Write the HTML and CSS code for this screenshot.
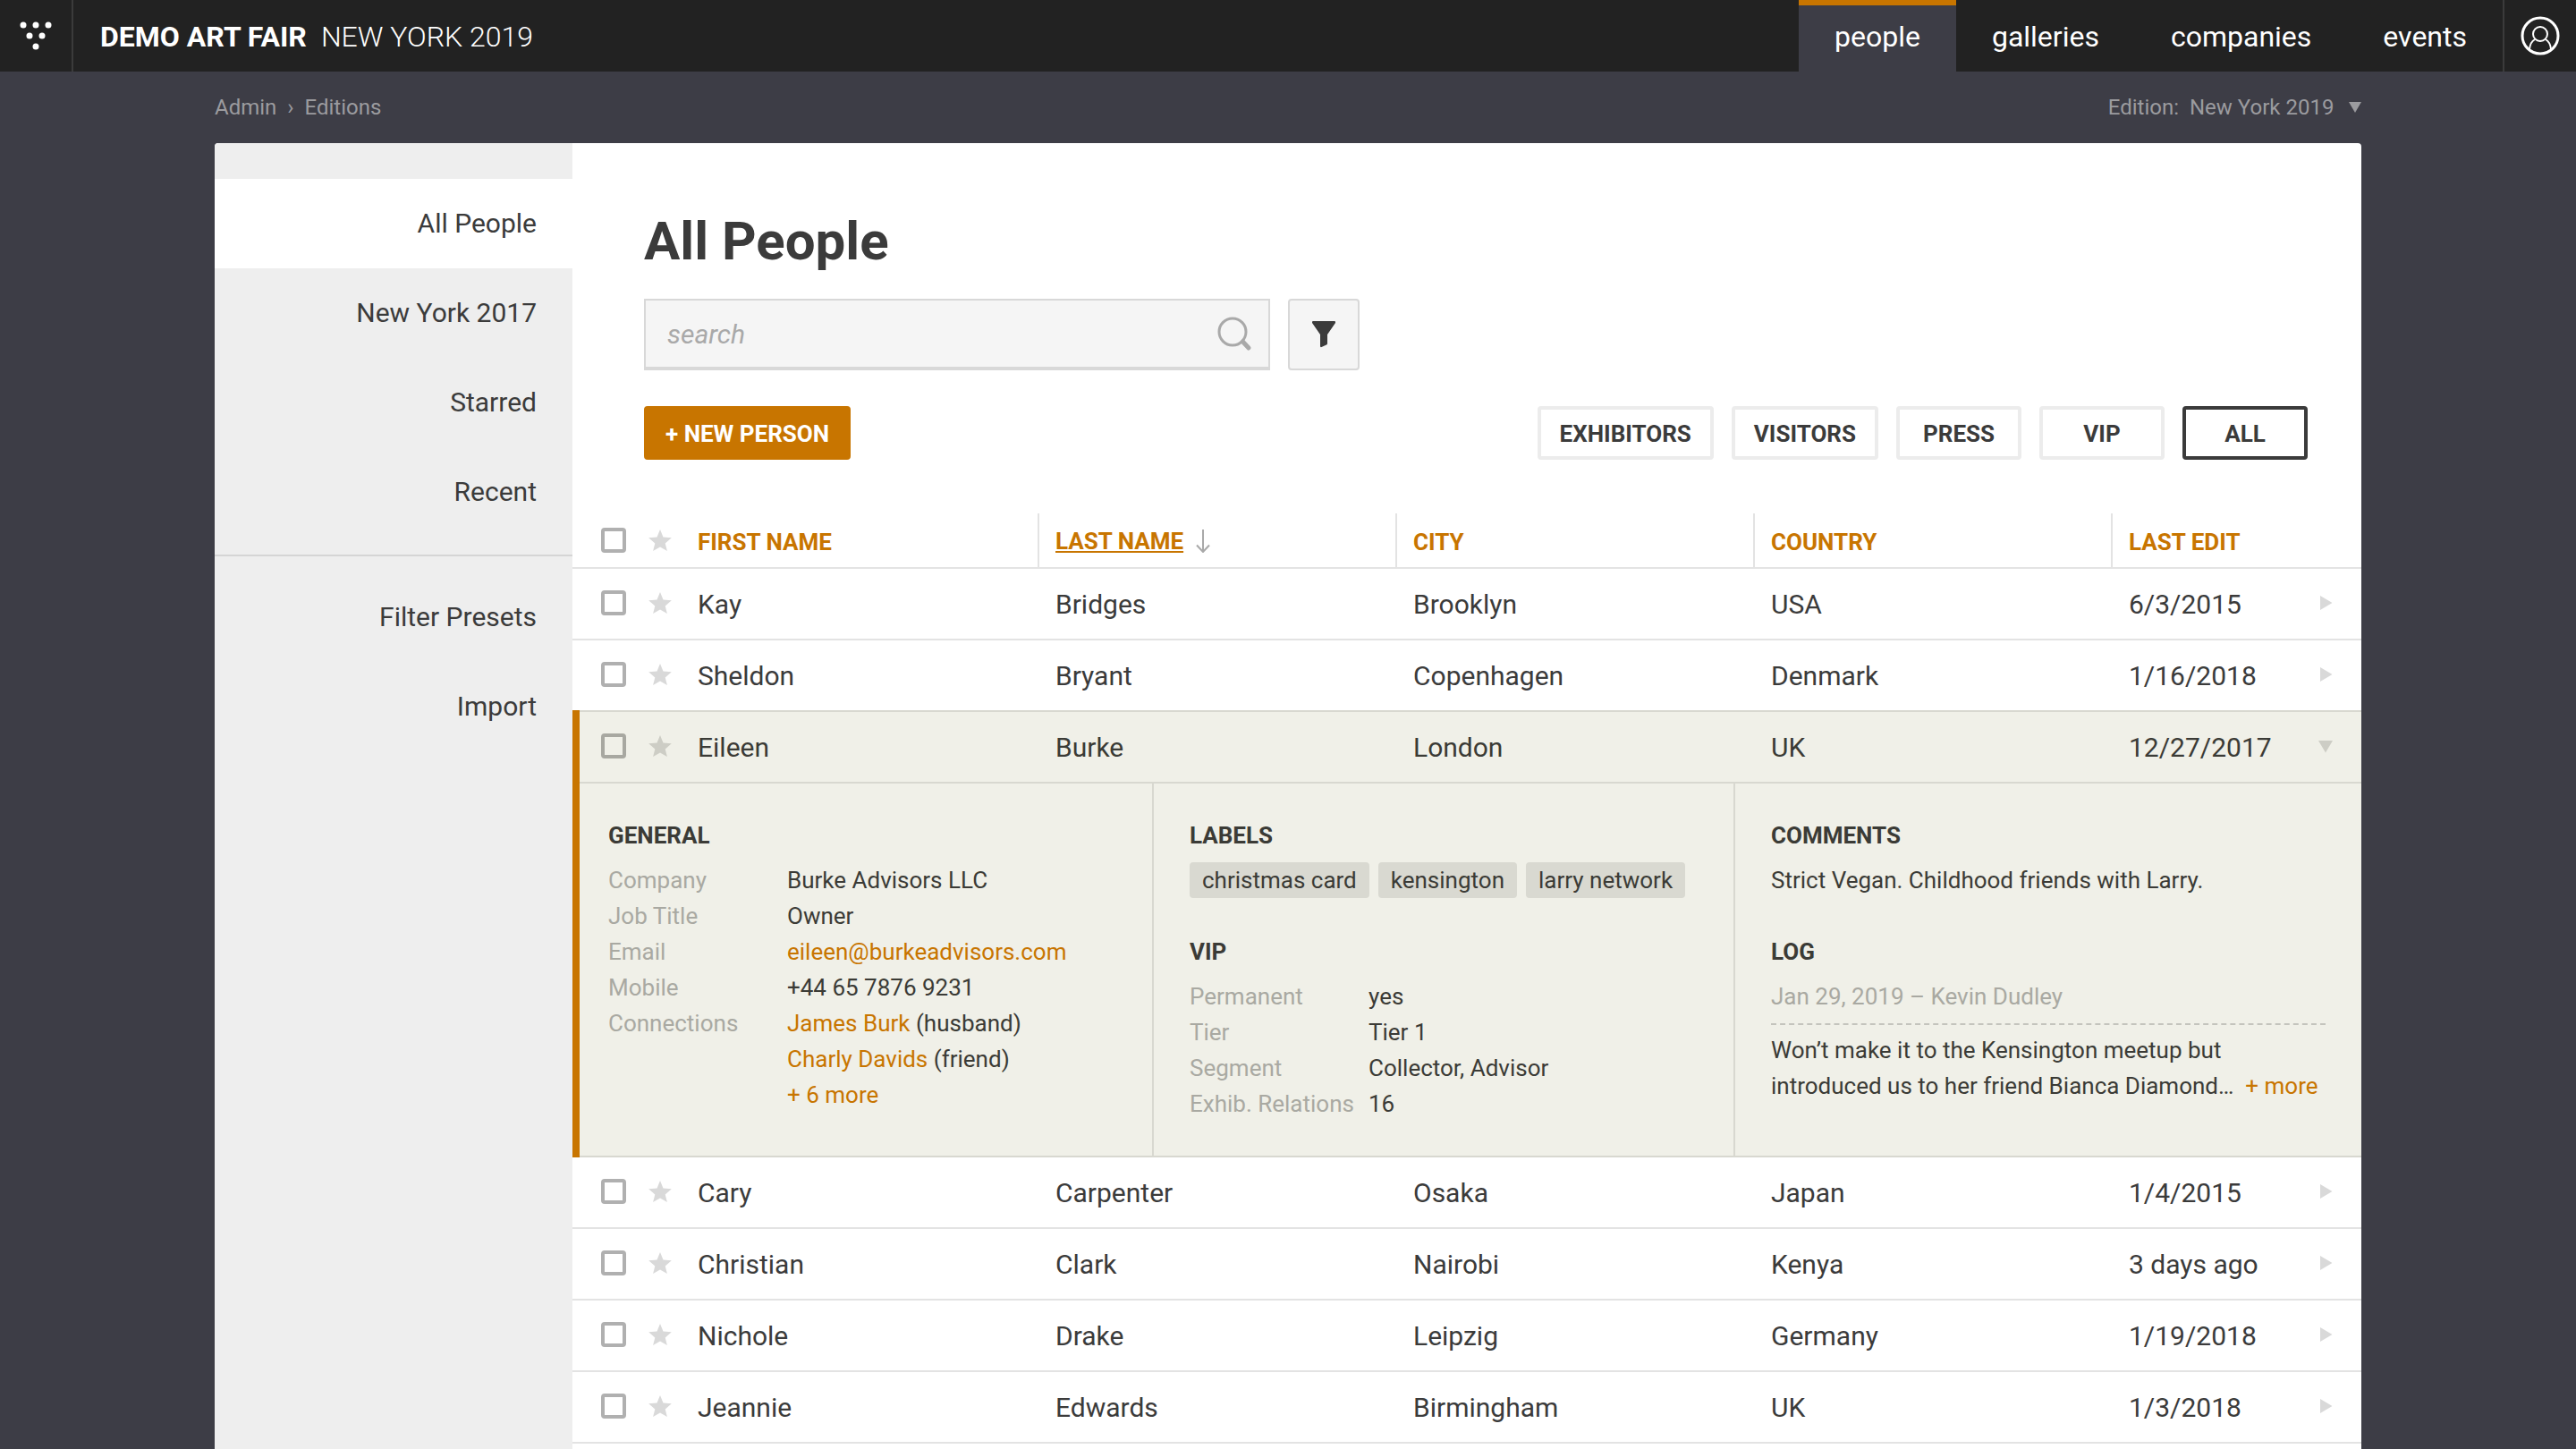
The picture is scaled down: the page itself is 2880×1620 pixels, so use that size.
FILE: index.html
```html
<!DOCTYPE html>
<html lang="en">
<head>
    <meta charset="UTF-8">
    <meta name="viewport" content="width=device-width, initial-scale=1.0">
    <title>All People - Demo Art Fair</title>
    <link rel="stylesheet" href="styles.css">
</head>
<body>
    <!-- shared icons -->
    <svg class="sprite" aria-hidden="true">
        <symbol id="star" viewBox="0 0 26 24">
            <path d="M13 0l3.500 8.600 9.300.7-7.100 6.100 2.200 8.600-7.900-4.500L5.100 24l2.200-8.600L.2 9.300l9.300-.7z"/>
        </symbol>
        <symbol id="triangle" viewBox="0 0 16 16">
            <path d="M2 0L15.500 8 2 16z"/>
        </symbol>
    </svg>

    <header class="topbar">
        <a class="logo" href="#" aria-label="Home">
            <svg width="80" height="80" viewBox="0 0 80 80" fill="#fff">
                <circle cx="26" cy="28" r="3.500"/>
                <circle cx="40" cy="28" r="3.500"/>
                <circle cx="54" cy="28" r="3.500"/>
                <circle cx="33" cy="40" r="3.500"/>
                <circle cx="47" cy="40" r="3.500"/>
                <circle cx="40" cy="52" r="3.500"/>
            </svg>
        </a>
        <div class="fair"><strong>DEMO ART FAIR</strong><span>NEW YORK 2019</span></div>
        <nav class="main-nav">
            <a class="active" href="#">people</a>
            <a href="#">galleries</a>
            <a href="#">companies</a>
            <a href="#">events</a>
        </nav>
        <a class="user" href="#" aria-label="Account">
            <svg width="80" height="80" viewBox="0 0 80 80" fill="none" stroke="#fff">
                <circle cx="40" cy="40" r="20" stroke-width="3"/>
                <circle cx="40" cy="38" r="8" stroke-width="2"/>
                <path d="M28 55c.5-5 2.500-9 6-11M52 55c-.5-5-2.500-9-6-11" stroke-width="2"/>
            </svg>
        </a>
    </header>

    <div class="subbar">
        <nav class="breadcrumb">
            <a href="#">Admin</a>
            <span>›</span>
            <a href="#">Editions</a>
        </nav>
        <div class="edition">
            <label for="edition">Edition:</label>
            <select id="edition">
                <option>New York 2019</option>
            </select>
            <svg width="14" height="12" viewBox="0 0 14 12"><path d="M0 0h14L7 12z"/></svg>
        </div>
    </div>

    <div class="container">
        <aside class="sidebar">
            <ul>
                <li><a class="active" href="#">All People</a></li>
                <li><a href="#">New York 2017</a></li>
                <li><a href="#">Starred</a></li>
                <li><a href="#">Recent</a></li>
            </ul>
            <ul>
                <li><a href="#">Filter Presets</a></li>
                <li><a href="#">Import</a></li>
            </ul>
        </aside>

        <main class="content">
            <div class="content-head">
                <h1>All People</h1>

                <div class="search-row">
                    <div class="search-box">
                        <input type="text" placeholder="search" aria-label="Search">
                        <button type="button" aria-label="Search">
                            <svg width="40" height="40" viewBox="0 0 40 40" fill="none" stroke="#a9a9a9">
                                <circle cx="18" cy="18" r="15" stroke-width="3"/>
                                <path d="M29.500 29l6.500 7" stroke-width="5" stroke-linecap="round"/>
                            </svg>
                        </button>
                    </div>
                    <button class="filter-btn" type="button" aria-label="Filter">
                        <svg width="26" height="30" viewBox="0 0 26 30" fill="#3b3b3b">
                            <path d="M1 0h24q1 0 1 1v1l-9 13v10q0 1-1 1.500L10.500 29Q9 29.500 9 28V15L0 2V1q0-1 1-1z"/>
                        </svg>
                    </button>
                </div>

                <div class="action-row">
                    <button class="new-btn" type="button">+ NEW PERSON</button>
                    <div class="group-filter">
                        <button type="button">EXHIBITORS</button>
                        <button type="button">VISITORS</button>
                        <button type="button">PRESS</button>
                        <button type="button">VIP</button>
                        <button class="active" type="button">ALL</button>
                    </div>
                </div>
            </div>

            <table class="people">
                <colgroup>
                    <col class="col-select">
                    <col class="col-first">
                    <col class="col-std">
                    <col class="col-std">
                    <col class="col-std">
                    <col class="col-edit">
                </colgroup>
                <thead>
                    <tr>
                        <th><div class="select"><input type="checkbox" aria-label="Select all"><button class="star" type="button" aria-label="Starred"><svg><use href="#star"/></svg></button></div></th>
                        <th><button type="button">FIRST NAME</button></th>
                        <th>
                            <button class="sorted" type="button"><span>LAST NAME</span><svg width="16" height="26" viewBox="0 0 16 26" fill="none" stroke="#a9a9a9" stroke-width="2"><path d="M8 0v24M1 17.500l7 7.500 7-7.500"/></svg></button>
                        </th>
                        <th><button type="button">CITY</button></th>
                        <th><button type="button">COUNTRY</button></th>
                        <th><button type="button">LAST EDIT</button></th>
                    </tr>
                </thead>
                <tbody>
                    <tr>
                        <td><div class="select"><input type="checkbox" aria-label="Select Kay Bridges"><button class="star" type="button" aria-label="Star"><svg><use href="#star"/></svg></button></div></td>
                        <td>Kay</td>
                        <td>Bridges</td>
                        <td>Brooklyn</td>
                        <td>USA</td>
                        <td><div class="last">6/3/2015<button class="toggle" type="button" aria-label="Expand"><svg><use href="#triangle"/></svg></button></div></td>
                    </tr>
                    <tr>
                        <td><div class="select"><input type="checkbox" aria-label="Select Sheldon Bryant"><button class="star" type="button" aria-label="Star"><svg><use href="#star"/></svg></button></div></td>
                        <td>Sheldon</td>
                        <td>Bryant</td>
                        <td>Copenhagen</td>
                        <td>Denmark</td>
                        <td><div class="last">1/16/2018<button class="toggle" type="button" aria-label="Expand"><svg><use href="#triangle"/></svg></button></div></td>
                    </tr>
                </tbody>
                <tbody class="open">
                    <tr>
                        <td><div class="select"><input type="checkbox" aria-label="Select Eileen Burke"><button class="star" type="button" aria-label="Star"><svg><use href="#star"/></svg></button></div></td>
                        <td>Eileen</td>
                        <td>Burke</td>
                        <td>London</td>
                        <td>UK</td>
                        <td><div class="last">12/27/2017<button class="toggle" type="button" aria-label="Collapse"><svg><use href="#triangle"/></svg></button></div></td>
                    </tr>
                    <tr class="detail">
                        <td colspan="6">
                            <div class="detail-grid">
                                <div class="detail-col">
                                    <section>
                                        <h2>GENERAL</h2>
                                        <dl>
                                            <dt>Company</dt>
                                            <dd>Burke Advisors LLC</dd>
                                            <dt>Job Title</dt>
                                            <dd>Owner</dd>
                                            <dt>Email</dt>
                                            <dd><a href="#">eileen@burkeadvisors.com</a></dd>
                                            <dt>Mobile</dt>
                                            <dd>+44 65 7876 9231</dd>
                                            <dt>Connections</dt>
                                            <dd>
                                                <a href="#">James Burk</a> (husband)<br>
                                                <a href="#">Charly Davids</a> (friend)<br>
                                                <a href="#">+ 6 more</a>
                                            </dd>
                                        </dl>
                                    </section>
                                </div>
                                <div class="detail-col">
                                    <section>
                                        <h2>LABELS</h2>
                                        <div class="tags">
                                            <span>christmas card</span>
                                            <span>kensington</span>
                                            <span>larry network</span>
                                        </div>
                                    </section>
                                    <section>
                                        <h2>VIP</h2>
                                        <dl>
                                            <dt>Permanent</dt>
                                            <dd>yes</dd>
                                            <dt>Tier</dt>
                                            <dd>Tier 1</dd>
                                            <dt>Segment</dt>
                                            <dd>Collector, Advisor</dd>
                                            <dt>Exhib. Relations</dt>
                                            <dd>16</dd>
                                        </dl>
                                    </section>
                                </div>
                                <div class="detail-col">
                                    <section>
                                        <h2>COMMENTS</h2>
                                        <p>Strict Vegan. Childhood friends with Larry.</p>
                                    </section>
                                    <section>
                                        <h2>LOG</h2>
                                        <p class="log-meta">Jan 29, 2019 – Kevin Dudley</p>
                                        <p>Won’t make it to the Kensington meetup but introduced us to her friend Bianca Diamond…&nbsp; <a href="#">+&nbsp;more</a></p>
                                    </section>
                                </div>
                            </div>
                        </td>
                    </tr>
                </tbody>
                <tbody>
                    <tr>
                        <td><div class="select"><input type="checkbox" aria-label="Select Cary Carpenter"><button class="star" type="button" aria-label="Star"><svg><use href="#star"/></svg></button></div></td>
                        <td>Cary</td>
                        <td>Carpenter</td>
                        <td>Osaka</td>
                        <td>Japan</td>
                        <td><div class="last">1/4/2015<button class="toggle" type="button" aria-label="Expand"><svg><use href="#triangle"/></svg></button></div></td>
                    </tr>
                    <tr>
                        <td><div class="select"><input type="checkbox" aria-label="Select Christian Clark"><button class="star" type="button" aria-label="Star"><svg><use href="#star"/></svg></button></div></td>
                        <td>Christian</td>
                        <td>Clark</td>
                        <td>Nairobi</td>
                        <td>Kenya</td>
                        <td><div class="last">3 days ago<button class="toggle" type="button" aria-label="Expand"><svg><use href="#triangle"/></svg></button></div></td>
                    </tr>
                    <tr>
                        <td><div class="select"><input type="checkbox" aria-label="Select Nichole Drake"><button class="star" type="button" aria-label="Star"><svg><use href="#star"/></svg></button></div></td>
                        <td>Nichole</td>
                        <td>Drake</td>
                        <td>Leipzig</td>
                        <td>Germany</td>
                        <td><div class="last">1/19/2018<button class="toggle" type="button" aria-label="Expand"><svg><use href="#triangle"/></svg></button></div></td>
                    </tr>
                    <tr>
                        <td><div class="select"><input type="checkbox" aria-label="Select Jeannie Edwards"><button class="star" type="button" aria-label="Star"><svg><use href="#star"/></svg></button></div></td>
                        <td>Jeannie</td>
                        <td>Edwards</td>
                        <td>Birmingham</td>
                        <td>UK</td>
                        <td><div class="last">1/3/2018<button class="toggle" type="button" aria-label="Expand"><svg><use href="#triangle"/></svg></button></div></td>
                    </tr>
                </tbody>
            </table>
        </main>
    </div>
</body>
</html>
```
FILE: styles.css
```css
* {
    margin: 0;
    padding: 0;
    box-sizing: border-box;
}

body {
    display: flex;
    flex-direction: column;
    min-height: 100vh;
    background: #3d3d46;
    color: #3b3b3b;
    font-family: Roboto, "Liberation Sans", sans-serif;
    font-size: 30px;
}

a {
    color: inherit;
    text-decoration: none;
}

ul {
    list-style: none;
}

button,
input,
select {
    font: inherit;
    color: inherit;
    background: none;
    border: none;
}

button {
    cursor: pointer;
}

svg {
    display: block;
}

.sprite {
    display: none;
}

/* top bar */
.topbar {
    display: flex;
    height: 80px;
    background: #222;
    color: #fff;
    font-size: 32px;
    line-height: 82px;
}

.logo {
    border-right: 2px solid #3b3b3b;
}

.fair {
    display: flex;
    gap: 16px;
    margin-left: 30px;
}

.fair span {
    font-weight: 300;
}

.main-nav {
    display: flex;
    margin-left: auto;
}

.main-nav a {
    padding: 0 40px;
}

.main-nav .active {
    background: #3d3d46;
    box-shadow: inset 0 6px #c87500;
}

.user {
    border-left: 2px solid #3b3b3b;
}

/* breadcrumb and edition */
.subbar {
    display: flex;
    justify-content: space-between;
    height: 80px;
    margin: 0 240px;
    color: #9b9b9f;
    font-size: 24px;
    line-height: 80px;
}

.breadcrumb {
    display: flex;
    gap: 12px;
}

.edition {
    display: flex;
    align-items: center;
    gap: 12px;
}

.edition select {
    appearance: none;
    margin-right: 4px;
}

.edition svg {
    fill: #9b9b9f;
}

/* page card */
.container {
    display: flex;
    flex: 1;
    margin: 0 240px;
    background: #fff;
    border-radius: 4px 4px 0 0;
    overflow: hidden;
}

.sidebar {
    flex: 0 0 400px;
    padding-top: 40px;
    background: #eee;
    text-align: right;
    line-height: 100px;
}

.sidebar ul + ul {
    margin-top: 20px;
    padding-top: 18px;
    border-top: 2px solid #d5d5d5;
}

.sidebar a {
    display: block;
    padding: 0 40px;
}

.sidebar .active {
    background: #fff;
}

.content {
    flex: 1;
    min-width: 0;
}

.content-head {
    padding: 80px 60px 60px 80px;
}

h1 {
    margin-bottom: 34px;
    font-size: 60px;
    line-height: 60px;
}

.search-row {
    display: flex;
    gap: 20px;
    margin-bottom: 40px;
}

.search-box {
    display: flex;
    align-items: center;
    width: 700px;
    height: 80px;
    padding: 0 18px 0 24px;
    background: #f5f5f5;
    border: 2px solid #d8d8d8;
    border-bottom-width: 4px;
}

.search-box input {
    flex: 1;
    min-width: 0;
    outline: none;
}

.search-box input::placeholder {
    color: #a9a9a9;
    font-style: italic;
}

.filter-btn {
    display: flex;
    align-items: center;
    justify-content: center;
    width: 80px;
    height: 80px;
    background: #f5f5f5;
    border: 2px solid #d8d8d8;
    border-radius: 4px;
}

.action-row {
    display: flex;
    justify-content: space-between;
}

.new-btn,
.group-filter button {
    height: 60px;
    padding: 2px 20px 0;
    border: 4px solid #ececec;
    border-radius: 4px;
    font-size: 26px;
    font-weight: 700;
}

.new-btn {
    background: #c87500;
    border-color: #c87500;
    color: #fff;
}

.group-filter {
    display: flex;
    gap: 20px;
}

.group-filter button {
    min-width: 140px;
    padding: 2px 21px 0;
}

.group-filter .active {
    border-color: #3b3b3b;
}

/* people table */
.people {
    width: 100%;
    table-layout: fixed;
    border-spacing: 0;
}

.col-select { width: 7%; }
.col-first { width: 19%; }
.col-std { width: 20%; }
.col-edit { width: 14%; }

.people th {
    height: 60px;
    padding-left: 18px;
    border-left: 2px solid #e3e3e3;
    text-align: left;
}

.people td {
    height: 80px;
    padding-left: 20px;
    border-top: 2px solid #e3e3e3;
}

.people th:nth-child(-n+2),
.people td:nth-child(2) {
    padding-left: 0;
    border-left: none;
}

.people td:first-child {
    padding-left: 0;
}

.people tbody:last-child tr:last-child td {
    height: 82px;
    border-bottom: 2px solid #e3e3e3;
}

.people th button {
    color: #c87500;
    font-size: 26px;
    font-weight: 700;
}

.people th .sorted {
    display: flex;
    align-items: center;
    gap: 14px;
    padding-top: 2px;
}

.sorted span {
    text-decoration: underline;
    text-decoration-thickness: 2px;
    text-underline-offset: 2px;
    text-decoration-skip-ink: none;
}

.select {
    display: flex;
    align-items: center;
    gap: 25px;
    padding-left: 32px;
}

td .select {
    padding-bottom: 2px;
}

.select input {
    appearance: none;
    width: 28px;
    height: 28px;
    border: 4px solid #b0b0b0;
    border-radius: 4px;
}

.star svg {
    width: 26px;
    height: 24px;
    fill: #d9d9d9;
}

.last {
    display: flex;
    align-items: center;
    justify-content: space-between;
    padding-right: 32px;
}

.toggle {
    padding-bottom: 2px;
}

.toggle svg {
    width: 16px;
    height: 16px;
    fill: #d9d9d9;
}

/* opened person */
.open {
    position: relative;
    background: #f0f0e8;
    color: #3b3b36;
}

.open::before {
    content: "";
    position: absolute;
    top: 0;
    bottom: -2px;
    left: 0;
    width: 8px;
    background: #c87500;
}

.people .open td,
.people .open + tbody tr:first-child td {
    border-top-color: #d8d8d0;
}

.open .select input {
    border-color: #a8a8a1;
}

.open .star svg,
.open .toggle svg {
    fill: #cdcdc5;
}

.open .toggle svg {
    transform: rotate(90deg);
}

.detail {
    font-size: 26px;
    line-height: 40px;
}

.detail-grid {
    display: grid;
    grid-template-columns: 324fr 325fr 351fr;
}

.detail-col {
    padding: 38px 40px;
}

.detail-col + .detail-col {
    border-left: 2px solid #d8d8d0;
}

.detail section + section {
    margin-top: 40px;
}

.detail h2 {
    margin-bottom: 10px;
    font-size: 26px;
    line-height: 40px;
}

.detail dl {
    display: grid;
    grid-template-columns: 200px 1fr;
}

.detail dt,
.log-meta {
    color: #a9a9a2;
}

.detail a {
    color: #c87500;
}

.tags {
    display: flex;
    gap: 10px;
}

.tags span {
    padding: 0 14px;
    background: #d9d9d1;
    border-radius: 4px;
    white-space: nowrap;
}

.log-meta {
    margin-bottom: 8px;
    padding-bottom: 10px;
    border-bottom: 2px dashed #c4c4bd;
}
```
